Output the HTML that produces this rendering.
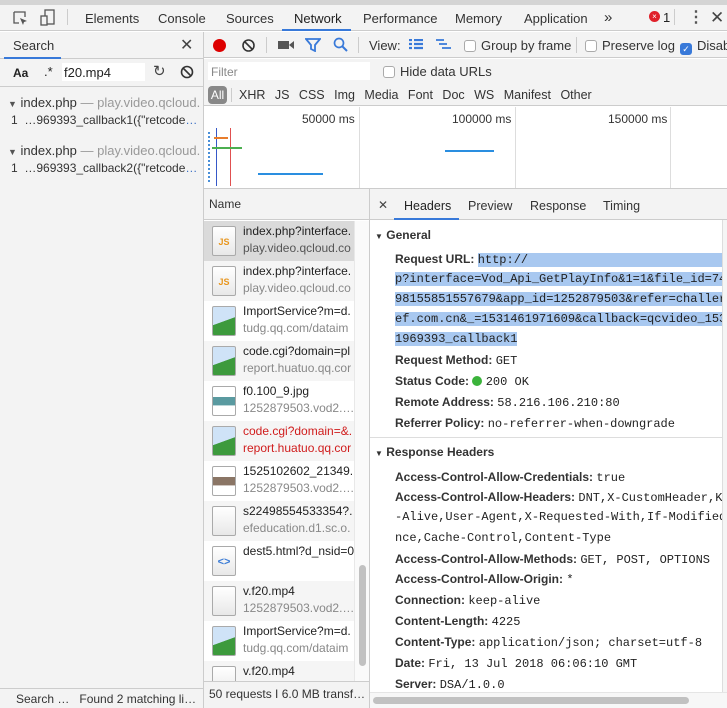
<!DOCTYPE html>
<html><head><meta charset="utf-8"><style>
*{box-sizing:border-box;margin:0;padding:0}
body{width:727px;height:708px;overflow:hidden;font-family:"Liberation Sans",sans-serif;font-size:12px;color:#222;background:#fff;position:relative}
.a{position:absolute;white-space:nowrap}
.mono{font-family:"Liberation Mono",monospace;font-size:12px}
.cb{display:inline-block;width:12px;height:12px;border:1px solid #aaa;border-radius:3px;background:#fff;vertical-align:-2px;margin-right:5px}
.row{position:absolute;left:204px;width:150px;height:40px;overflow:hidden}
.row .ic{position:absolute;left:8px;top:5px;width:24px;height:30px;border:1px solid #aaa;background:linear-gradient(#fff,#e8e8e8);border-radius:2px}
.row .t1{position:absolute;left:39px;top:3px;font-size:12px;color:#222;white-space:nowrap}
.row .t2{position:absolute;left:39px;top:20px;font-size:12px;color:#888;white-space:nowrap}
.lbl{font-weight:bold;color:#333}
.hl{background:#a8c8f0}
</style></head><body>
<div class="a" style="left:0;top:0;width:727px;height:5px;background:#d4d4d4"></div>
<div class="a" style="left:0;top:5px;width:727px;height:26px;background:#f3f3f3;border-bottom:1px solid #ccc"></div>
<svg class="a" style="left:12px;top:10px" width="18" height="18"><path d="M2 2h11v5M2 2v11h5" stroke="#555" fill="none" stroke-width="1.3"/><path d="M8 8l7 3-3 1-1 3z" fill="#555"/></svg>
<svg class="a" style="left:40px;top:9px" width="16" height="18"><rect x="5" y="1" width="9" height="14" fill="none" stroke="#555" stroke-width="1.3"/><rect x="1" y="7" width="6" height="9" fill="#f3f3f3" stroke="#555" stroke-width="1.3"/></svg>
<div class="a" style="left:67px;top:9px;width:1px;height:16px;background:#ccc"></div>
<div class="a" style="left:85px;top:11px;font-size:13px;color:#333">Elements</div>
<div class="a" style="left:158px;top:11px;font-size:13px;color:#333">Console</div>
<div class="a" style="left:226px;top:11px;font-size:13px;color:#333">Sources</div>
<div class="a" style="left:294px;top:11px;font-size:13px;color:#222">Network</div>
<div class="a" style="left:282px;top:29px;width:69px;height:2px;background:#3879d9"></div>
<div class="a" style="left:363px;top:11px;font-size:13px;color:#333">Performance</div>
<div class="a" style="left:455px;top:11px;font-size:13px;color:#333">Memory</div>
<div class="a" style="left:524px;top:11px;font-size:13px;color:#333">Application</div>
<div class="a" style="left:604px;top:9px;font-size:15px;color:#333">»</div>
<div class="a" style="left:649px;top:11px;width:11px;height:11px;border-radius:50%;background:#e0202a;color:#fff;font-size:8px;text-align:center;line-height:11px">×</div>
<div class="a" style="left:663px;top:10px;font-size:13px">1</div>
<div class="a" style="left:674px;top:9px;width:1px;height:16px;background:#ccc"></div>
<div class="a" style="left:688px;top:7px;font-size:16px;font-weight:bold;color:#555">⋮</div>
<div class="a" style="left:710px;top:8px;font-size:17px;color:#444">✕</div>

<div class="a" style="left:0;top:32px;width:204px;height:676px;background:#f3f3f3;border-right:1px solid #ccc"></div>
<div class="a" style="left:0;top:58px;width:204px;height:1px;background:#ccc"></div>
<div class="a" style="left:13px;top:38px;font-size:13px;color:#333">Search</div>
<div class="a" style="left:4px;top:57px;width:57px;height:2px;background:#3879d9"></div>
<div class="a" style="left:180px;top:35px;font-size:16px;color:#444">✕</div>
<div class="a" style="left:0;top:86px;width:203px;height:1px;background:#ccc"></div>
<div class="a" style="left:13px;top:66px;font-weight:bold;font-size:12px">Aa</div>
<div class="a" style="left:44px;top:64px;font-size:13px">.*</div>
<div class="a" style="left:62px;top:63px;width:83px;height:18px;background:#fff"></div>
<div class="a" style="left:64px;top:65px;font-size:13px">f20.mp4</div>
<div class="a" style="left:153px;top:62px;font-size:15px;color:#444">↻</div>
<svg class="a" style="left:180px;top:65px" width="14" height="14"><circle cx="7" cy="7" r="5.5" stroke="#333" stroke-width="1.6" fill="none"/><path d="M3 3l8 8" stroke="#333" stroke-width="1.6"/></svg>
<div class="a" style="left:8px;top:95px;font-size:13px;color:#333;width:194px;overflow:hidden"><span style="font-size:9px;color:#555">▼</span> index.php <span style="color:#999">— play.video.qcloud.…</span></div>
<div class="a" style="left:11px;top:113px;font-size:12px;color:#333">1 &nbsp;…969393_callback1({"retcode<span style="color:#3a6fc4">…</span></div>
<div class="a" style="left:8px;top:143px;font-size:13px;color:#333;width:194px;overflow:hidden"><span style="font-size:9px;color:#555">▼</span> index.php <span style="color:#999">— play.video.qcloud.…</span></div>
<div class="a" style="left:11px;top:161px;font-size:12px;color:#333">1 &nbsp;…969393_callback2({"retcode<span style="color:#3a6fc4">…</span></div>
<div class="a" style="left:0;top:688px;width:204px;height:1px;background:#ccc"></div>
<div class="a" style="left:16px;top:692px;font-size:12px;color:#333">Search …&nbsp;&nbsp; Found 2 matching li…</div>

<div class="a" style="left:204px;top:32px;width:523px;height:26px;background:#f3f3f3;border-bottom:1px solid #ccc"></div>
<div class="a" style="left:213px;top:39px;width:13px;height:13px;border-radius:50%;background:#d00"></div>
<svg class="a" style="left:241px;top:38px" width="15" height="15"><circle cx="7.5" cy="7.5" r="5.5" stroke="#333" stroke-width="1.6" fill="none"/><path d="M3.5 3.5l8 8" stroke="#333" stroke-width="1.6"/></svg>
<div class="a" style="left:266px;top:37px;width:1px;height:16px;background:#ccc"></div>
<svg class="a" style="left:278px;top:40px" width="16" height="10"><rect x="0" y="1" width="11" height="8" fill="#555"/><path d="M11 5l5-4v8z" fill="#555"/></svg>
<svg class="a" style="left:305px;top:38px" width="16" height="14"><path d="M1 1h14l-5 6v6l-4-2v-4z" fill="none" stroke="#3879d9" stroke-width="1.8"/></svg>
<svg class="a" style="left:333px;top:37px" width="15" height="16"><circle cx="6" cy="6" r="4.5" stroke="#3879d9" stroke-width="1.7" fill="none"/><path d="M9 9l5 5" stroke="#3879d9" stroke-width="2"/></svg>
<div class="a" style="left:358px;top:37px;width:1px;height:16px;background:#ccc"></div>
<div class="a" style="left:369px;top:38px;font-size:13px;color:#333">View:</div>
<svg class="a" style="left:409px;top:39px" width="14" height="12"><path d="M0 1h3M5 1h9M0 5h3M5 5h9M0 9h3M5 9h9" stroke="#3879d9" stroke-width="2.2"/></svg>
<svg class="a" style="left:436px;top:39px" width="16" height="12"><path d="M0 1h8M3 5h8M6 9h9" stroke="#3879d9" stroke-width="1.8"/></svg>
<div class="a" style="left:464px;top:38px;font-size:13px;color:#333"><span class="cb"></span>Group by frame</div>
<div class="a" style="left:576px;top:37px;width:1px;height:16px;background:#ccc"></div>
<div class="a" style="left:585px;top:38px;font-size:13px;color:#333"><span class="cb"></span>Preserve log</div>
<div class="a" style="left:680px;top:38px;font-size:13px;color:#333"><span class="cb" style="background:#3879d9;border-color:#3879d9;color:#fff;font-size:9px;text-align:center;line-height:10px">✓</span>Disab</div>
<div class="a" style="left:204px;top:59px;width:523px;height:47px;background:#f3f3f3;border-bottom:1px solid #ccc"></div>
<div class="a" style="left:208px;top:62px;width:162px;height:18px;background:#fff"></div>
<div class="a" style="left:211px;top:65px;font-size:12px;color:#888">Filter</div>
<div class="a" style="left:383px;top:64px;font-size:13px;color:#333"><span class="cb"></span>Hide data URLs</div>
<div class="a" style="left:208px;top:86px;width:19px;height:18px;border-radius:4px;background:#888;color:#fff;font-size:12px;text-align:center;line-height:18px">All</div>
<div class="a" style="left:231px;top:88px;width:1px;height:14px;background:#ccc"></div>
<div class="a" style="left:239px;top:88px;font-size:12.5px;color:#333;word-spacing:6px">XHR JS CSS Img Media Font Doc WS Manifest Other</div>
<div class="a" style="left:204px;top:107px;width:523px;height:81px;background:#fff"></div>
<div class="a" style="left:359px;top:107px;width:1px;height:81px;background:#ddd"></div>
<div class="a" style="left:515px;top:107px;width:1px;height:81px;background:#ddd"></div>
<div class="a" style="left:670px;top:107px;width:1px;height:81px;background:#ddd"></div>
<div class="a" style="left:302px;top:112px;font-size:12px;color:#333">50000 ms</div>
<div class="a" style="left:452px;top:112px;font-size:12px;color:#333">100000 ms</div>
<div class="a" style="left:608px;top:112px;font-size:12px;color:#333">150000 ms</div>
<div class="a" style="left:216px;top:128px;width:1px;height:58px;background:#3658c8"></div>
<div class="a" style="left:230px;top:128px;width:1px;height:58px;background:#e05050"></div>
<div class="a" style="left:208px;top:132px;width:6px;height:50px;border-left:2px dotted #4a90d9"></div>
<div class="a" style="left:214px;top:137px;width:14px;height:2px;background:#e87d2c"></div>
<div class="a" style="left:212px;top:147px;width:30px;height:2px;background:#4caf50"></div>
<div class="a" style="left:258px;top:173px;width:65px;height:2px;background:#2a8ee0"></div>
<div class="a" style="left:445px;top:150px;width:49px;height:2px;background:#2a8ee0"></div>
<div class="a" style="left:204px;top:188px;width:523px;height:1px;background:#ccc"></div>

<div class="a" style="left:204px;top:189px;width:165px;height:31px;background:#f3f3f3;border-bottom:1px solid #ccc"></div>
<div class="a" style="left:209px;top:197px;font-size:12px;color:#333">Name</div>
<div class="a" style="left:369px;top:189px;width:1px;height:519px;background:#ccc"></div>
<div class="row" style="top:221px;background:#dadada"><div class="ic"><div style="margin:10px 2px 0;color:#e8961e;font-size:9px;font-weight:bold;text-align:center">JS</div></div><div class="t1">index.php?interface.</div><div class="t2" style="color:#555">play.video.qcloud.co</div></div>
<div class="row" style="top:261px;background:#f5f5f5"><div class="ic"><div style="margin:10px 2px 0;color:#e8961e;font-size:9px;font-weight:bold;text-align:center">JS</div></div><div class="t1">index.php?interface.</div><div class="t2">play.video.qcloud.co</div></div>
<div class="row" style="top:301px;background:#fff"><div class="ic" style="background:linear-gradient(160deg,#cfe3f7 50%,#3d9a3d 51%)"></div><div class="t1">ImportService?m=d.</div><div class="t2">tudg.qq.com/dataim</div></div>
<div class="row" style="top:341px;background:#f5f5f5"><div class="ic" style="background:linear-gradient(160deg,#cfe3f7 50%,#3d9a3d 51%)"></div><div class="t1">code.cgi?domain=pl</div><div class="t2">report.huatuo.qq.cor</div></div>
<div class="row" style="top:381px;background:#fff"><div class="ic" style="background:linear-gradient(#fff 35%,#5a9aa0 36%,#5a9aa0 65%,#fff 66%)"></div><div class="t1">f0.100_9.jpg</div><div class="t2">1252879503.vod2.…</div></div>
<div class="row" style="top:421px;background:#f5f5f5"><div class="ic" style="background:linear-gradient(160deg,#cfe3f7 50%,#3d9a3d 51%)"></div><div class="t1" style="color:#d01c1c">code.cgi?domain=&amp;.</div><div class="t2" style="color:#d01c1c">report.huatuo.qq.cor</div></div>
<div class="row" style="top:461px;background:#fff"><div class="ic" style="background:linear-gradient(#fff 35%,#8a7565 36%,#8a7565 65%,#fff 66%)"></div><div class="t1">1525102602_21349.</div><div class="t2">1252879503.vod2.…</div></div>
<div class="row" style="top:501px;background:#f5f5f5"><div class="ic"></div><div class="t1">s22498554533354?.</div><div class="t2">efeducation.d1.sc.o.</div></div>
<div class="row" style="top:541px;background:#fff"><div class="ic"><div style="margin:9px 0 0;color:#3a7bd5;font-size:11px;font-weight:bold;text-align:center">&lt;&gt;</div></div><div class="t1">dest5.html?d_nsid=0</div></div>
<div class="row" style="top:581px;background:#f5f5f5"><div class="ic"></div><div class="t1">v.f20.mp4</div><div class="t2">1252879503.vod2.…</div></div>
<div class="row" style="top:621px;background:#fff"><div class="ic" style="background:linear-gradient(160deg,#cfe3f7 50%,#3d9a3d 51%)"></div><div class="t1">ImportService?m=d.</div><div class="t2">tudg.qq.com/dataim</div></div>
<div class="row" style="top:661px;height:20px;background:#f5f5f5"><div class="ic"></div><div class="t1">v.f20.mp4</div></div>
<div class="a" style="left:354px;top:221px;width:15px;height:460px;background:#fafafa;border-left:1px solid #e8e8e8"></div>
<div class="a" style="left:359px;top:565px;width:7px;height:101px;border-radius:4px;background:#c1c1c1"></div>
<div class="a" style="left:204px;top:681px;width:165px;height:27px;background:#f3f3f3;border-top:1px solid #ccc"></div>
<div class="a" style="left:209px;top:687px;font-size:12px;color:#333">50 requests I 6.0 MB transf…</div>

<div class="a" style="left:370px;top:189px;width:357px;height:31px;background:#f3f3f3;border-bottom:1px solid #ccc"></div>
<div class="a" style="left:378px;top:198px;font-size:12px;color:#444">✕</div>
<div class="a" style="left:404px;top:199px;font-size:12.5px;color:#222">Headers</div>
<div class="a" style="left:394px;top:218px;width:65px;height:2px;background:#3879d9"></div>
<div class="a" style="left:468px;top:199px;font-size:12.5px;color:#333">Preview</div>
<div class="a" style="left:530px;top:199px;font-size:12.5px;color:#333">Response</div>
<div class="a" style="left:603px;top:199px;font-size:12.5px;color:#333">Timing</div>
<div class="a" style="left:375px;top:228px;font-weight:bold;color:#333"><span style="font-size:8px">▼</span> General</div>
<div class="a" style="left:395px;top:252px"><span class="lbl">Request URL:</span> <span class="mono hl" style="padding-right:200px">http://</span></div>
<div class="a mono hl" style="left:395px;top:272px;width:332px">p?interface=Vod_Api_GetPlayInfo&amp;1=1&amp;file_id=74</div>
<div class="a mono hl" style="left:395px;top:292px;width:332px">98155851557679&amp;app_id=1252879503&amp;refer=challer</div>
<div class="a mono hl" style="left:395px;top:312px;width:332px">ef.com.cn&amp;_=1531461971609&amp;callback=qcvideo_153</div>
<div class="a mono hl" style="left:395px;top:332px">1969393_callback1</div>
<div class="a" style="left:395px;top:353px"><span class="lbl">Request Method:</span> <span class="mono">GET</span></div>
<div class="a" style="left:395px;top:374px"><span class="lbl">Status Code:</span> <span style="display:inline-block;width:10px;height:10px;border-radius:50%;background:#3bb33b;vertical-align:-1px"></span> <span class="mono">200 OK</span></div>
<div class="a" style="left:395px;top:395px"><span class="lbl">Remote Address:</span> <span class="mono">58.216.106.210:80</span></div>
<div class="a" style="left:395px;top:416px"><span class="lbl">Referrer Policy:</span> <span class="mono">no-referrer-when-downgrade</span></div>
<div class="a" style="left:370px;top:437px;width:352px;height:1px;background:#ddd"></div>
<div class="a" style="left:375px;top:445px;font-weight:bold;color:#333"><span style="font-size:8px">▼</span> Response Headers</div>
<div class="a" style="left:395px;top:470px"><span class="lbl">Access-Control-Allow-Credentials:</span> <span class="mono">true</span></div>
<div class="a" style="left:395px;top:490px"><span class="lbl">Access-Control-Allow-Headers:</span> <span class="mono">DNT,X-CustomHeader,K</span></div>
<div class="a mono" style="left:395px;top:510px">-Alive,User-Agent,X-Requested-With,If-Modified</div>
<div class="a mono" style="left:395px;top:531px">nce,Cache-Control,Content-Type</div>
<div class="a" style="left:395px;top:552px"><span class="lbl">Access-Control-Allow-Methods:</span> <span class="mono">GET, POST, OPTIONS</span></div>
<div class="a" style="left:395px;top:572px"><span class="lbl">Access-Control-Allow-Origin:</span> <span class="mono">*</span></div>
<div class="a" style="left:395px;top:593px"><span class="lbl">Connection:</span> <span class="mono">keep-alive</span></div>
<div class="a" style="left:395px;top:614px"><span class="lbl">Content-Length:</span> <span class="mono">4225</span></div>
<div class="a" style="left:395px;top:635px"><span class="lbl">Content-Type:</span> <span class="mono">application/json; charset=utf-8</span></div>
<div class="a" style="left:395px;top:656px"><span class="lbl">Date:</span> <span class="mono">Fri, 13 Jul 2018 06:06:10 GMT</span></div>
<div class="a" style="left:395px;top:677px"><span class="lbl">Server:</span> <span class="mono">DSA/1.0.0</span></div>
<div class="a" style="left:722px;top:220px;width:5px;height:472px;background:#f5f5f5;border-left:1px solid #ddd"></div>
<div class="a" style="left:370px;top:692px;width:357px;height:16px;background:#f7f7f7;border-top:1px solid #e5e5e5"></div>
<div class="a" style="left:373px;top:697px;width:316px;height:7px;border-radius:4px;background:#c1c1c1"></div>
</body></html>
